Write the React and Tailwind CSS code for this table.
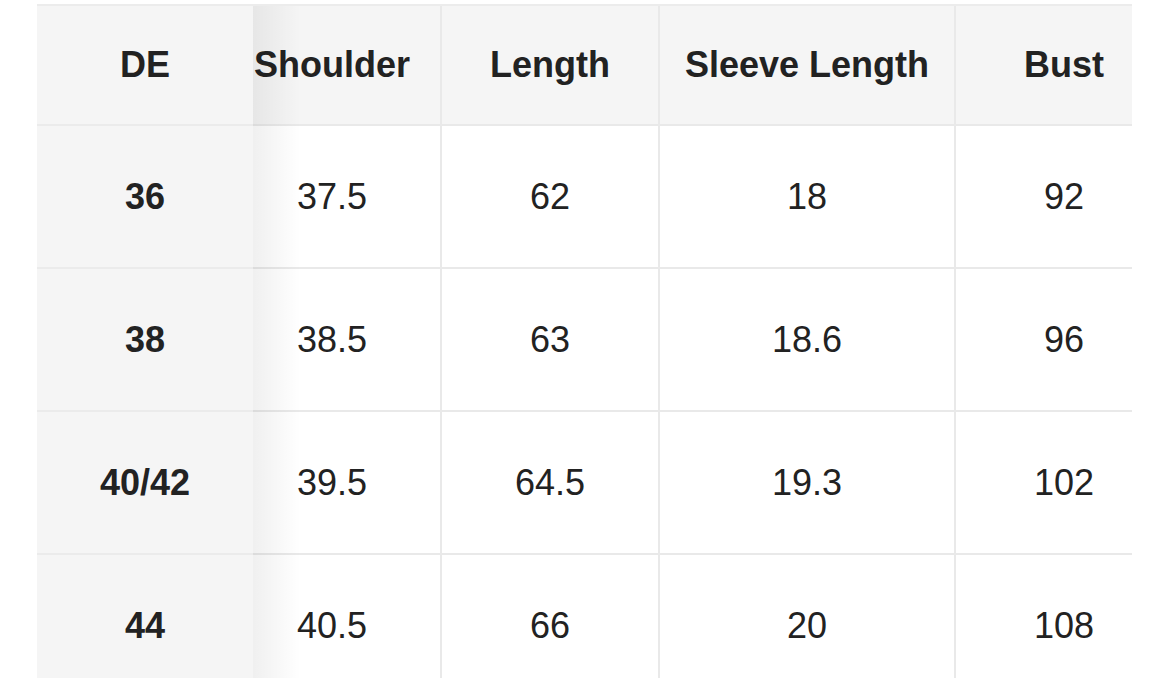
import React from 'react';

const sizes = [
  { de: '36', values: ['37.5', '62', '18', '92'] },
  { de: '38', values: ['38.5', '63', '18.6', '96'] },
  { de: '40/42', values: ['39.5', '64.5', '19.3', '102'] },
  { de: '44', values: ['40.5', '66', '20', '108'] },
];

const columns = [
  { label: 'Shoulder', width: 'w-[218px]' },
  { label: 'Length', width: 'w-[218px]' },
  { label: 'Sleeve Length', width: 'w-[296px]' },
  { label: 'Bust', width: 'w-[218px]' },
];

const App = () => {
  return (
    <div
      className="min-h-screen bg-white pt-[4px] pl-[37px] text-[36px] text-[#222]"
      style={{ fontFamily: '"Liberation Sans", Arial, sans-serif' }}
    >
      <div className="flex w-[1095px] overflow-hidden border-t-2 border-[#ececec]">
        {/* Sticky size column */}
        <div className="flex w-[216px] shrink-0 flex-col bg-[#f5f5f5]">
          <div className="flex h-[120px] items-center justify-center border-b-2 border-[#ebebeb] font-bold">
            DE
          </div>
          {sizes.map((row) => (
            <div
              key={row.de}
              className="flex h-[143px] items-center justify-center border-b-2 border-[#ebebeb] font-bold"
            >
              {row.de}
            </div>
          ))}
        </div>

        {/* Scrolled measurements */}
        <div className="relative flex-1 overflow-hidden">
          <div className="-ml-[29px] flex w-[950px] flex-col">
            <div className="flex h-[120px] border-b-2 border-[#e9e9e9] bg-[#f5f5f5] font-bold">
              {columns.map((col) => (
                <div
                  key={col.label}
                  className={`${col.width} flex shrink-0 items-center justify-center border-r-2 border-[#e9e9e9]`}
                >
                  {col.label}
                </div>
              ))}
            </div>
            {sizes.map((row) => (
              <div key={row.de} className="flex h-[143px] border-b-2 border-[#e9e9e9] bg-white">
                {row.values.map((v, i) => (
                  <div
                    key={i}
                    className={`${columns[i].width} flex shrink-0 items-center justify-center border-r-2 border-[#e9e9e9]`}
                  >
                    {v}
                  </div>
                ))}
              </div>
            ))}
          </div>
          <div className="pointer-events-none absolute inset-y-0 left-0 w-[48px] bg-gradient-to-r from-black/[0.06] to-transparent" />
        </div>
      </div>
    </div>
  );
};

export default App;
